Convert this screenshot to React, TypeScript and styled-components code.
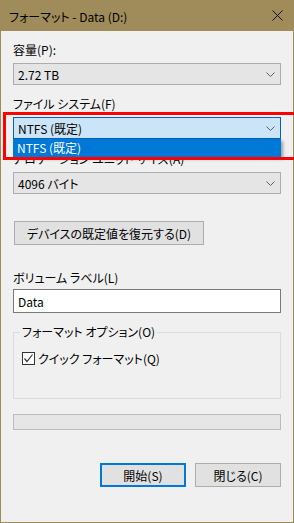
import styled, { createGlobalStyle } from 'styled-components';

const GlobalStyle = createGlobalStyle`
  html, body {
    margin: 0;
    padding: 0;
    overflow: hidden;
    background: #f0f0f0;
  }
  body {
    font-family: "Noto Sans CJK JP", "Noto Sans", sans-serif;
    font-size: 12px;
    font-feature-settings: "palt";
    color: #000;
  }
`;

const Window = styled.div`
  width: 294px;
  height: 523px;
  box-sizing: border-box;
  border: 1px solid #9e8a56;
  border-top: none;
  background: #f0f0f0;
  display: flex;
  flex-direction: column;
`;

const TitleBar = styled.div`
  height: 31px;
  margin: 0 -1px;
  padding: 0 11px 0 9px;
  background: #a08c5a;
  display: flex;
  align-items: center;
  justify-content: space-between;
  flex-shrink: 0;
`;

const TitleText = styled.span`
  line-height: 16px;
  margin-top: 2px;
`;

const Body = styled.div`
  padding: 0 12px;
  display: flex;
  flex-direction: column;
`;

const Label = styled.div<{ $top: number; $gap?: number }>`
  line-height: 16px;
  height: 16px;
  margin-top: ${(p) => p.$top}px;
  margin-bottom: ${(p) => p.$gap ?? 5}px;
  white-space: nowrap;
`;

const Field = styled.div`
  position: relative;
`;

const Combo = styled.div<{ $active?: boolean }>`
  height: 22px;
  box-sizing: border-box;
  border: 1px solid ${(p) => (p.$active ? '#0063b1' : '#adadad')};
  background: ${(p) => (p.$active ? '#cce4f7' : '#e5e5e5')};
  padding: 0 5px 0 4px;
  display: flex;
  align-items: center;
  justify-content: space-between;
`;

const DropList = styled.div`
  position: absolute;
  top: 100%;
  left: 0;
  right: 0;
  height: 18px;
  padding-left: 4px;
  background: #0078d7;
  color: #fff;
  line-height: 18px;
  box-shadow: 2px 2px 3px rgba(0, 0, 0, 0.35);
  z-index: 2;
`;

const Highlight = styled.div`
  position: absolute;
  left: -10px;
  top: -5px;
  right: -30px;
  bottom: -21px;
  border: 3px solid #ff0000;
  z-index: 3;
  pointer-events: none;
`;

const Button = styled.button<{ $width: number; $default?: boolean }>`
  width: ${(p) => p.$width}px;
  height: 24px;
  box-sizing: border-box;
  margin: 0;
  padding: 0;
  border: ${(p) => (p.$default ? '2px solid #0078d7' : '1px solid #adadad')};
  background: #e1e1e1;
  font: inherit;
  color: #000;
  text-align: center;
`;

const RestoreButton = styled(Button)`
  margin: 27px 0 0 1px;
`;

const TextInput = styled.div`
  height: 24px;
  box-sizing: border-box;
  border: 1px solid #7a7a7a;
  background: #fff;
  padding-left: 4px;
  display: flex;
  align-items: center;
`;

const Group = styled.fieldset`
  margin: 11px 0 0;
  padding: 0 6px 32px;
  border: 1px solid #dcdcdc;
  min-width: 0;
`;

const Legend = styled.legend`
  padding: 0 2px;
  line-height: 16px;
`;

const CheckRow = styled.label`
  margin: 10px 0 0 2px;
  height: 16px;
  display: flex;
  align-items: center;
  gap: 3px;
`;

const CheckBox = styled.span`
  width: 13px;
  height: 13px;
  box-sizing: border-box;
  border: 1px solid #333;
  background: #fff;
  display: flex;
  align-items: center;
  justify-content: center;
`;

const Progress = styled.div`
  margin-top: 15px;
  height: 16px;
  box-sizing: border-box;
  border: 1px solid #bcbcbc;
  background: #e6e6e6;
`;

const ButtonRow = styled.div`
  margin-top: 33px;
  display: flex;
  justify-content: flex-end;
  gap: 9px;
`;

const Chevron = () => (
  <svg width="9" height="5" viewBox="0 0 9 5">
    <path d="M0.5 0.5 L4.5 4.5 L8.5 0.5" fill="none" stroke="#606060" strokeWidth="1" />
  </svg>
);

const CloseIcon = () => (
  <svg width="11" height="11" viewBox="0 0 11 11">
    <path d="M0.5 0.5 L10.5 10.5 M10.5 0.5 L0.5 10.5" stroke="#111" strokeWidth="1" />
  </svg>
);

const CheckMark = () => (
  <svg width="11" height="11" viewBox="0 0 11 11">
    <path d="M1.5 5.5 L4 8.5 L9.5 1.5" fill="none" stroke="#333" strokeWidth="1.2" />
  </svg>
);

const App = () => {
  return (
    <>
      <GlobalStyle />
      <Window>
        <TitleBar>
          <TitleText>フォーマット - Data (D:)</TitleText>
          <CloseIcon />
        </TitleBar>
        <Body>
          <Label $top={11}>容量(P):</Label>
          <Combo>
            <span>2.72 TB</span>
            <Chevron />
          </Combo>

          <Label $top={11}>ファイル システム(F)</Label>
          <Field>
            <Combo $active>
              <span>NTFS (既定)</span>
              <Chevron />
            </Combo>
            <DropList>NTFS (既定)</DropList>
            <Highlight />
          </Field>

          <Label $top={12}>アロケーション ユニット サイズ(A)</Label>
          <Combo>
            <span>4096 バイト</span>
            <Chevron />
          </Combo>

          <RestoreButton $width={190}>デバイスの既定値を復元する(D)</RestoreButton>

          <Label $top={25} $gap={3}>ボリューム ラベル(L)</Label>
          <TextInput>Data</TextInput>

          <Group>
            <Legend>フォーマット オプション(O)</Legend>
            <CheckRow>
              <CheckBox>
                <CheckMark />
              </CheckBox>
              <span>クイック フォーマット(Q)</span>
            </CheckRow>
          </Group>

          <Progress />

          <ButtonRow>
            <Button $width={86} $default>開始(S)</Button>
            <Button $width={86}>閉じる(C)</Button>
          </ButtonRow>
        </Body>
      </Window>
    </>
  );
};

export default App;
